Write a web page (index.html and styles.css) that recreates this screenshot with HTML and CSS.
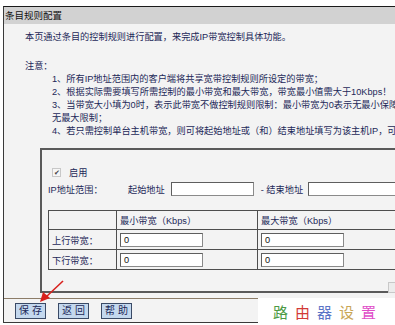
FILE: index.html
```html
<!DOCTYPE html>
<html lang="zh-CN">
<head>
  <meta charset="UTF-8" />
  <title>条目规则配置</title>
  <link rel="stylesheet" href="styles.css">
</head>
<body>
  <div class="frame">
    <div class="title">条目规则配置</div>
    <div class="content">
      <p class="intro">本页通过条目的控制规则进行配置，来完成IP带宽控制具体功能。</p>
      <p class="note">注意：</p>
      <div class="items">
        <div>1、所有IP地址范围内的客户端将共享宽带控制规则所设定的带宽；</div>
        <div>2、根据实际需要填写所需控制的最小带宽和最大带宽，带宽最小值需大于10Kbps！</div>
        <div>3、当带宽大小填为0时，表示此带宽不做控制规则限制：最小带宽为0表示无最小保障；最大带宽为0表示</div>
        <div>无最大限制；</div>
        <div>4、若只需控制单台主机带宽，则可将起始地址或（和）结束地址填写为该主机IP，可以只填写其中一个。</div>
      </div>

      <div class="box">
        <div class="enable"><span class="check">✔</span>启用</div>
        <div class="range">
          <span class="range-label">IP地址范围：</span>
          <span>起始地址</span>
          <span class="field wide"></span>
          <span class="dash">- 结束地址</span>
          <span class="field wide"></span>
        </div>
        <table class="bw">
          <tr class="head">
            <td class="name"></td>
            <td>最小带宽（Kbps）</td>
            <td>最大带宽（Kbps）</td>
          </tr>
          <tr>
            <td class="name">上行带宽：</td>
            <td><span class="field">0</span></td>
            <td><span class="field">0</span></td>
          </tr>
          <tr>
            <td class="name">下行带宽：</td>
            <td><span class="field">0</span></td>
            <td><span class="field">0</span></td>
          </tr>
        </table>
      </div>
    </div>
    <div class="actions">
      <span class="btn">保 存</span>
      <span class="btn">返 回</span>
      <span class="btn">帮 助</span>
    </div>
  </div>

  <!-- red pointer drawn on top of the screenshot -->
  <svg class="arrow" width="30" height="24" viewBox="0 0 30 24">
    <line x1="26" y1="2" x2="9" y2="18" stroke="#d8201c" stroke-width="1.6" />
    <polygon points="3,23 6,13 13,19" fill="#d8201c" />
  </svg>

  <div class="grip"></div>

  <div class="mark">
    <span class="c1">路</span><span class="c2">由</span><span class="c3">器</span><span class="c4">设</span><span class="c5">置</span>
  </div>
</body>
</html>
```

FILE: styles.css
```css
* {
  margin: 0;
  padding: 0;
  box-sizing: border-box;
}
body {
  background: white;
  font-family: "Liberation Sans", "Noto Sans CJK SC", sans-serif;
  font-size: 9.2px;
  color: #1c2858;
  overflow: hidden;
  width: 395px;
  height: 325px;
  position: relative;
}
.frame {
  margin: 6px 0 0 3px;
  width: 640px;
  border-top: 1px solid #1a1a1a;
  border-left: 1px solid #3a3a3a;
  border-bottom: 1px solid #3a3a3a;
  background: #f3f3f3;
}
.title {
  height: 17px;
  line-height: 17px;
  padding-left: 1px;
  background: #d2d2d2;
  color: #111;
  font-size: 9.5px;
}
.content {
  padding: 7px 0 5px 21px;
}
.intro,
.note,
.items div {
  line-height: 13px;
  white-space: nowrap;
}
.note {
  margin-top: 16px;
}
.items {
  margin-left: 27px;
}
.box {
  margin: 10px 0 0 15px;
  border: 2px solid #5a5a5a;
  padding: 15px 0 21px 6px;
}
.enable {
  display: flex;
  align-items: center;
  height: 14px;
  gap: 8px;
  padding-left: 4px;
}
.check {
  width: 9px;
  height: 9px;
  border: 1px solid #c8c8c8;
  background: #f6f6f6;
  font-size: 7px;
  line-height: 8px;
  text-align: center;
  color: #444;
}
.range {
  display: flex;
  align-items: center;
  height: 16px;
  margin-top: 2px;
  white-space: nowrap;
}
.range-label {
  width: 80px;
}
.field {
  display: block;
  width: 83px;
  height: 14px;
  line-height: 12px;
  padding-left: 3px;
  background: white;
  border: 1px solid #8a8a8a;
  border-top-color: #5e5e5e;
  border-left-color: #5e5e5e;
  color: #111;
}
.range .wide {
  margin-left: 6px;
}
.range .field + .dash {
  margin-left: 7px;
}
.dash + .field.wide {
  margin-left: 5px;
  width: 120px;
}
.bw {
  margin-top: 13px;
  border-collapse: collapse;
  white-space: nowrap;
}
.bw td {
  border: 1px solid #4e4e4e;
  height: 20px;
  padding: 0 3px;
  width: 141px;
}
.bw .head td {
  height: 19px;
}
.bw td.name {
  width: 68px;
}
.actions {
  border-top: 1px solid #8c7c68;
  height: 24px;
  padding: 4px 0 0 11px;
  display: flex;
  gap: 12px;
}
.btn {
  width: 31px;
  height: 16px;
  line-height: 14px;
  text-align: center;
  background: #c4d8ee;
  border: 1px solid #3a4a66;
  color: #1c2858;
  font-size: 10px;
}
.arrow {
  position: absolute;
  left: 37px;
  top: 279px;
}
.grip {
  position: absolute;
  left: 388px;
  top: 282px;
  width: 9px;
  height: 11px;
  background: #ececec;
  border: 1px solid #c8c8c8;
}
.mark {
  position: absolute;
  left: 258px;
  top: 298px;
  width: 137px;
  height: 27px;
  background: white;
  padding-left: 15px;
  display: flex;
  align-items: center;
  gap: 7px;
  font-size: 15px;
}
.c1 { color: #4c9a44; }
.c2 { color: #d23a36; }
.c3 { color: #5a74c6; }
.c4 { color: #c9a656; }
.c5 { color: #e04cc8; }
```
